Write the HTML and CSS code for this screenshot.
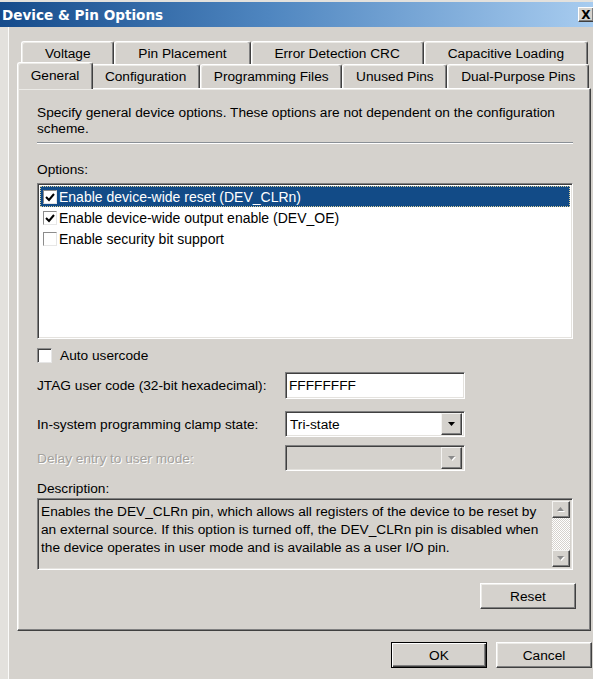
FILE: index.html
```html
<!DOCTYPE html>
<html lang="en">
<head>
<meta charset="utf-8">
<title>Device &amp; Pin Options</title>
<link rel="stylesheet" href="styles.css">
</head>
<body>
<div class="window">
  <div class="titlebar">
    <span class="title">Device &amp; Pin Options</span>
    <span class="close">X</span>
  </div>
  <div class="frame">
    <div class="tabs">
      <div class="tabrow back">
        <div class="tab">Voltage</div>
        <div class="tab">Pin Placement</div>
        <div class="tab">Error Detection CRC</div>
        <div class="tab">Capacitive Loading</div>
      </div>
      <div class="tabrow front">
        <div class="tab active">General</div>
        <div class="tab">Configuration</div>
        <div class="tab">Programming Files</div>
        <div class="tab">Unused Pins</div>
        <div class="tab">Dual-Purpose Pins</div>
      </div>
    </div>

    <div class="panel">
      <p class="intro">Specify general device options. These options are not dependent on the configuration scheme.</p>
      <div class="rule"></div>

      <div class="label options-label">Options:</div>
      <div class="listbox sunken">
        <div class="item selected">
          <span class="cb"><svg viewBox="0 0 12 12" width="12" height="12"><path d="M2 6 L5 9 L10 3" fill="none" stroke="#000" stroke-width="2"/></svg></span>
          <span class="item-text">Enable device-wide reset (DEV_CLRn)</span>
        </div>
        <div class="item">
          <span class="cb"><svg viewBox="0 0 12 12" width="12" height="12"><path d="M2 6 L5 9 L10 3" fill="none" stroke="#000" stroke-width="2"/></svg></span>
          <span class="item-text">Enable device-wide output enable (DEV_OE)</span>
        </div>
        <div class="item">
          <span class="cb"></span>
          <span class="item-text">Enable security bit support</span>
        </div>
      </div>

      <div class="check-row">
        <span class="cb big"></span>
        <span>Auto usercode</span>
      </div>

      <div class="field-row jtag">
        <span class="field-label">JTAG user code (32-bit hexadecimal):</span>
        <div class="textbox sunken">FFFFFFFF</div>
      </div>

      <div class="field-row clamp">
        <span class="field-label">In-system programming clamp state:</span>
        <div class="combo sunken">
          <span class="combo-value">Tri-state</span>
          <span class="drop raised"><svg viewBox="0 0 7 4" width="7" height="4"><path d="M0 0 H7 L3.5 4 Z" fill="#000"/></svg></span>
        </div>
      </div>

      <div class="field-row delay disabled">
        <span class="field-label">Delay entry to user mode:</span>
        <div class="combo sunken">
          <span class="combo-value"></span>
          <span class="drop raised"><svg viewBox="0 0 8 5" width="8" height="5"><path d="M1 1 H8 L4.5 5 Z" fill="#fff"/><path d="M0 0 H7 L3.5 4 Z" fill="#8a8a8a"/></svg></span>
        </div>
      </div>

      <div class="label desc-label">Description:</div>
      <div class="desc sunken">
        <div class="desc-text">Enables the DEV_CLRn pin, which allows all registers of the device to be reset by an external source. If this option is turned off, the DEV_CLRn pin is disabled when the device operates in user mode and is available as a user I/O pin.</div>
        <div class="scrollbar">
          <span class="sb-btn raised"><svg viewBox="0 0 8 5" width="8" height="5"><path d="M1 5 H8 L4.5 1 Z" fill="#fff"/><path d="M0 4 H7 L3.5 0 Z" fill="#8a8a8a"/></svg></span>
          <span class="sb-track"></span>
          <span class="sb-btn raised"><svg viewBox="0 0 8 5" width="8" height="5"><path d="M1 1 H8 L4.5 5 Z" fill="#fff"/><path d="M0 0 H7 L3.5 4 Z" fill="#8a8a8a"/></svg></span>
        </div>
      </div>

      <div class="reset-row">
        <button class="btn" type="button">Reset</button>
      </div>
    </div>

    <div class="buttons">
      <button class="btn default" type="button">OK</button>
      <button class="btn" type="button">Cancel</button>
    </div>
  </div>
</div>
</body>
</html>
```

FILE: styles.css
```css
/* Classic dialog palette */
html, body {
  margin: 0;
  padding: 0;
  overflow: hidden;
  background: #e3e1dd;
}

body {
  font-family: "Liberation Sans", Arial, sans-serif;
  font-size: 13.7px;
  color: #000;
}

.window {
  width: 598px;
  height: 679px;
  padding-top: 2px;
  box-sizing: border-box;
  display: flex;
  flex-direction: column;
}

/* Caption bar */
.titlebar {
  flex: none;
  height: 25px;
  display: flex;
  align-items: center;
  justify-content: space-between;
  padding-left: 2px;
  background: linear-gradient(to right, #154b8b 0%, #4f86c0 45%, #a9cdf0 100%);
}

.title {
  font-family: "DejaVu Sans", Verdana, sans-serif;
  font-weight: bold;
  font-size: 13.6px;
  color: #fff;
}

.close {
  width: 16px;
  height: 15px;
  margin-right: 4px;
  box-sizing: border-box;
  background: #d5d2cd;
  border: 1px solid;
  border-color: #fff #404040 #404040 #fff;
  box-shadow: inset -1px -1px #808080;
  font: bold 12px "DejaVu Sans", Verdana, sans-serif;
  display: flex;
  align-items: center;
  justify-content: center;
  line-height: 1;
}

/* Client area */
.frame {
  flex: 1;
  background: #d5d2cd;
  border-left: 8px solid #e3e1dd;
  box-shadow: inset 1px 0 #fbfbfa;
  padding: 14px 7px 0 9px;
}

/* Tab strip: two justified rows */
.tabrow {
  display: flex;
}

.tabrow.back {
  height: 23px;
  margin: 0 3px 0 4px;
}

.tabrow.front {
  height: 24px;
  margin: 0 2px;
  position: relative;
  z-index: 1;
}

.tab {
  flex: 1 1 auto;
  display: flex;
  align-items: center;
  justify-content: center;
  white-space: nowrap;
  padding: 0 6px;
  background: #d5d2cd;
  border-top: 1px solid #fff;
  border-left: 1px solid #fff;
  border-right: 1px solid #404040;
  border-radius: 3px 3px 0 0;
  box-shadow: inset -1px 0 #808080, inset 1px 1px #ecebe7;
}

.tab.active {
  margin: -2px -2px -1px;
  padding-bottom: 1px;
  position: relative;
  z-index: 2;
}

/* Page of the tab control */
.panel {
  height: 543px;
  box-sizing: border-box;
  border: 1px solid;
  border-color: #fff #404040 #404040 #fff;
  box-shadow: inset -1px -1px #808080, inset 1px 1px #ecebe7;
  padding: 16px 17px 0 19px;
  display: flex;
  flex-direction: column;
}

.intro {
  margin: 0;
  line-height: 16px;
}

.rule {
  margin-top: 5px;
  height: 0;
  border-top: 1px solid #8a9096;
  border-bottom: 1px solid #fff;
}

.label {
  line-height: 16px;
}

.options-label {
  margin-top: 18px;
}

/* Sunken 3D edge used by list, edit and combo boxes */
.sunken {
  box-sizing: border-box;
  border: 1px solid;
  border-color: #808080 #fff #fff #808080;
  box-shadow: inset 1px 1px #404040, inset -1px -1px #e4e2de;
}

.raised {
  box-sizing: border-box;
  background: #d5d2cd;
  border: 1px solid;
  border-color: #f4f3f1 #404040 #404040 #f4f3f1;
  box-shadow: inset -1px -1px #808080;
  display: flex;
  align-items: center;
  justify-content: center;
}

.listbox {
  margin-top: 5px;
  height: 156px;
  background: #fff;
  padding: 2px;
}

.item {
  height: 21px;
  box-sizing: border-box;
  display: flex;
  align-items: center;
  gap: 2px;
  padding-left: 2px;
  border: 1px solid transparent;
  font-size: 14px;
}

.item.selected {
  background: #124b87;
  color: #fff;
  border: 1px dotted #d9cf9a;
}

.cb {
  width: 14px;
  height: 14px;
  flex: none;
  box-sizing: border-box;
  background: #fff;
  border: 1px solid;
  border-color: #8c8c8c #e6e6e6 #e6e6e6 #8c8c8c;
  display: flex;
  align-items: center;
  justify-content: center;
}

.cb.big {
  width: 15px;
  height: 15px;
  box-shadow: inset 1px 1px #404040;
}

.check-row {
  margin-top: 8px;
  height: 16px;
  display: flex;
  align-items: center;
  gap: 8px;
}

.field-row {
  display: flex;
  align-items: center;
}

.field-label {
  width: 248px;
  flex: none;
}

.jtag {
  margin-top: 9px;
}

.clamp {
  margin-top: 12px;
}

.delay {
  margin-top: 8px;
}

.disabled .field-label {
  color: #a3a19d;
  text-shadow: 1px 1px #fff;
}

.textbox {
  width: 180px;
  height: 27px;
  background: #fff;
  padding: 0 3px;
  display: flex;
  align-items: center;
}

.combo {
  width: 180px;
  height: 26px;
  background: #fff;
  padding: 2px;
  display: flex;
  align-items: center;
}

.disabled .combo {
  background: #d5d2cd;
}

.combo-value {
  flex: 1;
  padding-left: 2px;
}

.drop {
  width: 21px;
  height: 22px;
  flex: none;
}

.desc-label {
  margin-top: 10px;
}

.desc {
  margin-top: 1px;
  height: 72px;
  padding: 2px;
  display: flex;
}

.desc-text {
  flex: 1;
  padding: 2px 2px 0 1px;
  line-height: 18px;
}

.scrollbar {
  width: 18px;
  flex: none;
  display: flex;
  flex-direction: column;
}

.sb-btn {
  height: 17px;
  flex: none;
}

.sb-track {
  flex: 1;
  background: repeating-conic-gradient(#fff 0 25%, #d5d2cd 0 50%) 0 0 / 2px 2px;
}

.reset-row {
  margin-top: 13px;
  margin-right: -3px;
  display: flex;
  justify-content: flex-end;
}

/* Push buttons */
.btn {
  width: 96px;
  height: 26px;
  padding: 0;
  font: inherit;
  color: #000;
  background: #d5d2cd;
  border: 1px solid;
  border-color: #fff #404040 #404040 #fff;
  box-shadow: inset -1px -1px #808080, inset 1px 1px #ecebe7;
}

.btn.default {
  border-color: #000;
  box-shadow: inset 1px 1px #fff, inset -1px -1px #404040, inset -2px -2px #808080;
}

.buttons {
  margin-top: 11px;
  margin-right: -1px;
  display: flex;
  justify-content: flex-end;
  gap: 9px;
}
```
